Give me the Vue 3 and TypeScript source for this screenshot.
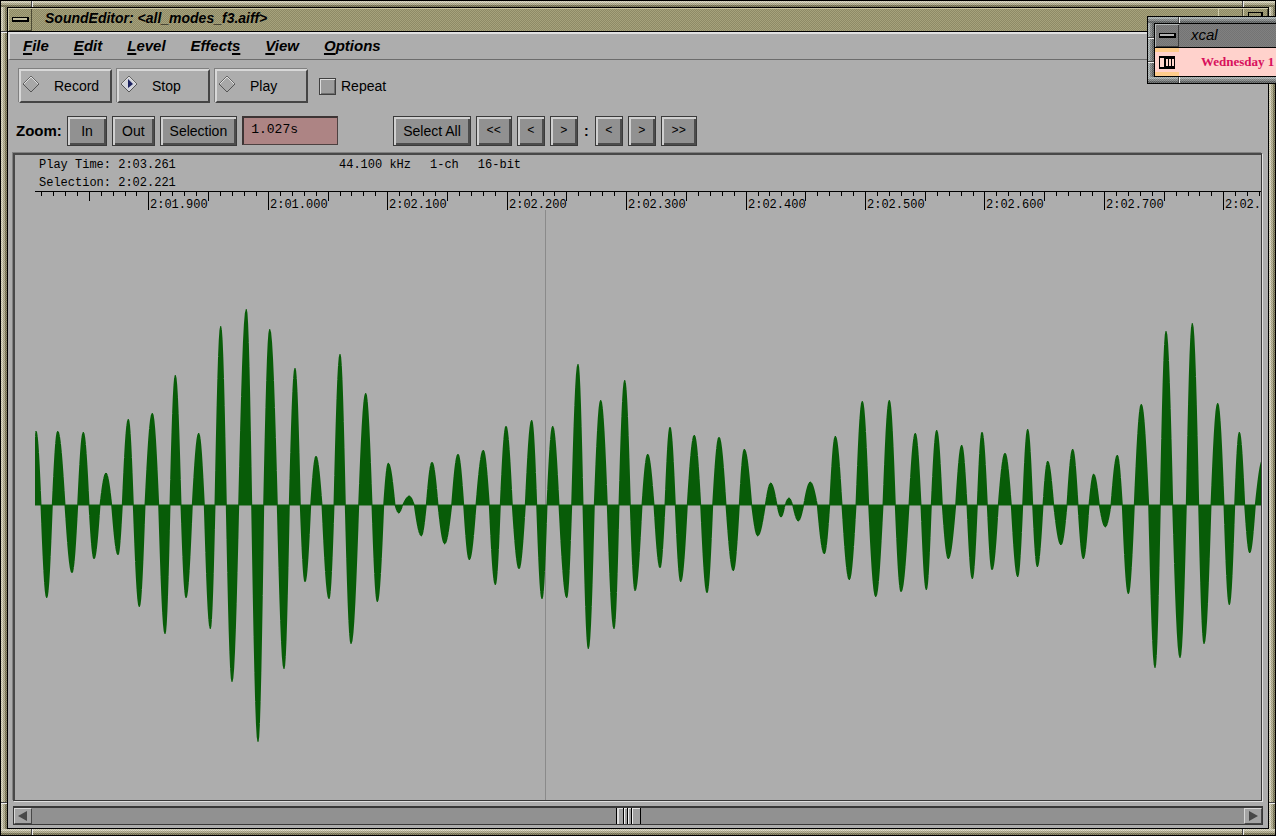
<script setup lang="ts">
import { ref } from 'vue'

interface MenuEntry { before: string; key: string; after: string }
interface Tick { left: string; kind: string; label: string }
type Lobe = [start: number, peak: number, amplitude: number]

const menus: MenuEntry[] = [
  { before: '', key: 'F', after: 'ile' },
  { before: '', key: 'E', after: 'dit' },
  { before: '', key: 'L', after: 'evel' },
  { before: 'Effect', key: 's', after: '' },
  { before: '', key: 'V', after: 'iew' },
  { before: '', key: 'O', after: 'ptions' },
]

const transport = ['Record', 'Stop', 'Play']
const active = ref('Stop')
const repeat = ref(false)
const duration = ref('1.027s')

const PLOT_WIDTH = 1226
const BASELINE = 295

const labels = ['2:01.900', '2:01.000', '2:02.100', '2:02.200', '2:02.300', '2:02.400', '2:02.500', '2:02.600', '2:02.700', '2:02.']

const ticks: Tick[] = []
for (let i = -9; i <= 93; i++) {
  const x = Math.round(113.4 + i * 11.944)
  const major = i >= 0 && i % 10 === 0
  const half = i % 5 === 0
  ticks.push({
    left: (x / PLOT_WIDTH) * 100 + '%',
    kind: major ? 'major' : half ? 'half' : 'minor',
    label: major ? labels[i / 10] : '',
  })
}

// Half-cycles of the signal: where each begins, where it peaks, and its signed height.
const lobes: Lobe[] = [
  [34, 36, 74], [41, 46.7, -93], [52.3, 57.7, 74], [65, 72, -68], [77.7, 83.3, 73], [89, 94, -54],
  [100, 106, 32], [111.7, 118, -50], [122.3, 128.3, 86], [133.3, 139.3, -102], [145, 152.3, 92],
  [158.7, 165, -129], [170, 175.3, 130], [181, 186, -93], [192.3, 198.7, 72], [204.3, 210.3, -124],
  [215, 220.7, 179], [226.3, 232, -177], [238.7, 246.3, 196], [251.7, 258, -237], [263.7, 269.7, 176],
  [277.3, 284, -164], [289.3, 295, 137], [300.3, 305, -77], [310.7, 316, 49], [322, 329, -94],
  [334, 340, 151], [345.3, 351, -139], [358.7, 365.7, 112], [372, 377.3, -97], [383.7, 388.3, 42],
  [395, 398.7, -8], [402.7, 409.3, 9], [414.3, 421.3, -31], [426.3, 432, 43], [438, 444.7, -39],
  [451.7, 458, 51], [463.7, 469.3, -55], [476, 483.3, 55], [489.3, 495.3, -80], [500.3, 506, 79],
  [512.3, 519, -64], [525.3, 531.7, 85], [536.7, 542, -94], [547, 552.7, 79], [559, 566.7, -93],
  [571.7, 578, 141], [583, 588.3, -144], [594.3, 600.7, 105], [607.3, 614, -124], [619, 624.7, 125],
  [630.3, 635, -86], [642, 647.7, 51], [654, 660, -63], [665, 670, 78], [675.3, 680.7, -77],
  [687.3, 694.3, 70], [700.7, 707, -88], [712.7, 719, 68], [726, 733.3, -66], [739.3, 744.3, 56],
  [751.7, 757.7, -31], [765.3, 770.7, 22], [777, 781, -12], [785, 789, 7], [792.7, 798.3, -16],
  [803.7, 810.3, 23], [817.3, 824.3, -49], [829.7, 835.3, 69], [842, 849.3, -75], [856, 862.3, 104],
  [868.7, 875.7, -92], [883, 889.3, 105], [895.3, 901, -87], [909, 915.3, 72], [921, 926.3, -85],
  [931.3, 936.7, 75], [942.3, 948.3, -54], [955.7, 961.7, 60], [967, 972.3, -74], [977.3, 982, 73],
  [987.3, 992, -65], [998.3, 1005, 52], [1011.3, 1017.7, -72], [1022.7, 1027.7, 76],
  [1032.7, 1037.3, -62], [1043, 1047.7, 44], [1053.7, 1061, -40], [1067, 1072.7, 56], [1078, 1083.3, -54],
  [1089, 1093.7, 31], [1099.3, 1105.3, -22], [1111, 1117.3, 50], [1122.3, 1128.3, -89],
  [1134.3, 1141.3, 101], [1148.7, 1155, -163], [1160.3, 1166, 174], [1172.7, 1180, -153],
  [1186.3, 1192.3, 182], [1198.7, 1204, -139], [1211, 1217.7, 102], [1224, 1229.3, -100],
  [1234.7, 1239.3, 73], [1244.7, 1249.7, -48], [1255.3, 1263, 46], [1270, 1275, 0],
]

const ORIGIN = 35
const point = (x: number, height: number) => `L${(x - ORIGIN).toFixed(2)} ${(BASELINE + 0.5 - height).toFixed(2)}`
let wave = `M0 ${BASELINE + 0.5}`
for (let n = 0; n < lobes.length - 1; n++) {
  const [start, peak, amp] = lobes[n]
  const end = lobes[n + 1][0]
  const steps = 8
  for (let s = 0; s <= steps; s++) {
    const x = start + ((peak - start) * s) / steps
    if (x >= ORIGIN) wave += point(x, amp * Math.sin((Math.PI / 2) * (s / steps)))
  }
  for (let s = 1; s <= steps; s++) {
    wave += point(peak + ((end - peak) * s) / steps, amp * Math.cos((Math.PI / 2) * (s / steps)))
  }
}
wave += 'Z'
</script>

<template>
  <div class="desktop">
    <main class="frame">
      <i class="notch-v top start"></i><i class="notch-v top end"></i>
      <i class="notch-v bottom start"></i><i class="notch-v bottom end"></i>
      <i class="notch-h left upper"></i><i class="notch-h left lower"></i><i class="notch-h right lower"></i>
      <div class="window">
        <header class="titlebar">
          <button class="tb-menu" aria-label="Window menu"><span class="dash"></span></button>
          <h1 class="title">SoundEditor: &lt;all_modes_f3.aiff&gt;</h1>
          <button class="tb-btn" aria-label="Minimize"><span class="dot"></span></button>
          <button class="tb-btn" aria-label="Maximize"><span class="square"></span></button>
        </header>

        <nav class="menubar">
          <button v-for="m in menus" :key="m.key" class="menu">{{ m.before }}<u>{{ m.key }}</u>{{ m.after }}</button>
        </nav>

        <section class="transport">
          <button v-for="t in transport" :key="t" class="deck" @click="active = t">
            <svg class="led" width="18" height="18" viewBox="0 0 18 18">
              <path d="M9 1L17 9L9 17L1 9Z" :fill="active === t ? '#d2d4dc' : '#a8a8a8'" />
              <path d="M1 9L9 17L17 9" fill="none" stroke="#555" stroke-width="1" />
              <path d="M1 9L9 1L17 9" fill="none" stroke="#666" stroke-width="1" />
              <path d="M2 9L9 2L16 9" fill="none" stroke="#e0e0e0" stroke-width="1" />
              <path v-if="active === t" d="M8 4L13 9L8 13Z" fill="#1c2260" />
            </svg>
            <span>{{ t }}</span>
          </button>
          <label class="repeat"><input v-model="repeat" type="checkbox" class="check" />Repeat</label>
        </section>

        <section class="zoombar">
          <label class="strong" for="zoom">Zoom:</label>
          <button class="push">In</button>
          <button class="push">Out</button>
          <button class="push">Selection</button>
          <input id="zoom" v-model="duration" class="field" type="text" />
          <button class="push">Select All</button>
          <button class="push arrow double">&lt;&lt;</button>
          <button class="push arrow">&lt;</button>
          <button class="push arrow">&gt;</button>
          <span class="colon">:</span>
          <button class="push arrow">&lt;</button>
          <button class="push arrow">&gt;</button>
          <button class="push arrow double">&gt;&gt;</button>
        </section>

        <section class="plot">
          <div class="info">
            <span class="time">Play Time: 2:03.261</span>
            <span>44.100 kHz</span><span>1-ch</span><span>16-bit</span>
          </div>
          <div class="info">Selection: 2:02.221</div>
          <div class="ruler">
            <span v-for="(t, i) in ticks" :key="i" class="tick" :class="t.kind" :style="{ left: t.left }">{{ t.label }}</span>
          </div>
          <svg class="wave" viewBox="0 0 1226 591" preserveAspectRatio="none" shape-rendering="crispEdges">
            <rect x="510" y="0" width="1" height="591" fill="#8a8a8a" />
            <path :d="wave" fill="#085c08" stroke="#085c08" stroke-width="1" stroke-linejoin="bevel" />
            <rect x="0" y="295" width="1226" height="1" fill="#085c08" />
          </svg>
        </section>

        <div class="scroll">
          <button class="sc-btn" aria-label="Scroll left"><svg width="10" height="10" viewBox="0 0 10 10"><path d="M0 5L9 0V10Z" fill="#484848" /></svg></button>
          <div class="track"><div class="thumb"><i></i><i></i><i></i></div></div>
          <button class="sc-btn" aria-label="Scroll right"><svg width="10" height="10" viewBox="0 0 10 10"><path d="M10 5L1 0V10Z" fill="#484848" /></svg></button>
        </div>
      </div>
    </main>

    <aside class="xcal">
      <i class="notch-v top xs"></i><i class="notch-v bottom xs"></i>
      <i class="notch-h left xu"></i><i class="notch-h left xl"></i>
      <div class="xcal-inner">
        <div class="xcal-title">
          <button class="tb-menu gray" aria-label="Calendar window menu"><span class="dash"></span></button>
          <h2 class="title light">xcal</h2>
        </div>
        <div class="xcal-body">
          <span class="cal-icon">
            <svg width="16" height="13" viewBox="0 0 16 13" shape-rendering="crispEdges">
              <rect width="16" height="13" fill="#000" />
              <rect x="1" y="2" width="4" height="9" fill="#ffd6cc" />
              <rect x="7" y="3" width="2" height="7" fill="#ffd6cc" />
              <rect x="10" y="3" width="2" height="7" fill="#ffd6cc" />
              <rect x="13" y="3" width="2" height="7" fill="#ffd6cc" />
            </svg>
          </span>
          <span class="date">Wednesday 1</span>
        </div>
      </div>
    </aside>
  </div>
</template>

<style>
body { margin: 0; }
</style>

<style scoped>
* { box-sizing: border-box; }
button, input { font: inherit; color: inherit; margin: 0; border-radius: 0; }
.desktop {
  position: relative;
  height: 100vh;
  overflow: hidden;
  font: 14px/16px "Liberation Sans", Arial, sans-serif;
  color: #000;
  background: #adadad;
}
.frame {
  --hi: #d4d0b8;
  --mid: #b0ac8c;
  --lo: #7a7656;
  height: 100%;
  position: relative;
}
.frame, .xcal {
  border: 1px solid #000;
  padding: 6px;
  background:
    repeating-conic-gradient(rgba(255, 255, 255, 0.16) 0 25%, rgba(0, 0, 0, 0.1) 0 50%) 0 0 / 2px 2px,
    linear-gradient(to bottom, var(--hi) 2px, var(--mid) 2px 4px, var(--lo) 4px) top / 100% 6px no-repeat,
    linear-gradient(to bottom, var(--hi) 2px, var(--mid) 2px 4px, var(--lo) 4px) bottom / 100% 6px no-repeat,
    linear-gradient(to right, var(--hi) 2px, var(--mid) 2px 4px, var(--lo) 4px) left / 6px 100% no-repeat,
    linear-gradient(to right, var(--hi) 2px, var(--mid) 2px 4px, var(--lo) 4px) right / 6px 100% no-repeat;
}
.notch-v, .notch-h { position: absolute; background: #444; }
.notch-v { width: 2px; height: 6px; border-right: 1px solid #eee; }
.notch-h { width: 6px; height: 2px; border-bottom: 1px solid #eee; }
.top { top: 0; }
.bottom { bottom: 0; }
.left { left: 0; }
.right { right: 0; }
.start { left: 30px; }
.end { right: 31px; }
.upper { top: 30px; }
.lower { bottom: 31px; }
.xs { left: 30px; }
.xu { top: 20px; }
.xl { top: 44px; }

.window {
  height: 100%;
  display: flex;
  flex-direction: column;
  border: 1px solid #000;
  background: #adadad;
}
.titlebar {
  display: flex;
  height: 24px;
  flex: none;
  border-bottom: 1px solid #000;
  background: repeating-conic-gradient(#8e8a66 0 25%, #a6a27c 0 50%) 0 0 / 2px 2px;
  box-shadow: inset 1px 1px 0 #c8c4a0;
}
.tb-menu, .tb-btn {
  width: 24px;
  padding: 0;
  border: 0;
  background: none;
  box-shadow: inset 1px 1px 0 #d0ccac, inset -1px -1px 0 #4c4a34;
  display: flex;
  align-items: center;
  justify-content: center;
}
.tb-btn { width: 25px; }
.gray { box-shadow: inset 1px 1px 0 #b4b8b8, inset -1px -1px 0 #3c3c3c; }
.dash {
  width: 17px;
  height: 5px;
  border: 1px solid #000;
  border-right-width: 2px;
  border-bottom-width: 2px;
  background: #c4c0a0;
}
.gray .dash { background: #b4b4b4; }
.dot { width: 5px; height: 5px; border: 1px solid #000; }
.square { width: 15px; height: 15px; border: 1px solid #000; border-right-width: 2px; }
.title {
  flex: 1;
  margin: 0;
  padding-left: 13px;
  font: italic bold 14px/21px "Liberation Sans", Arial, sans-serif;
}
.menubar {
  display: flex;
  gap: 25px;
  height: 28px;
  flex: none;
  padding: 0 13px 2px;
  border: 2px solid;
  border-color: #e0e0e0 #8a8a8a #6c6c6c #d8d8d8;
  border-right-width: 1px;
  border-bottom-width: 1px;
  align-items: center;
}
.menu {
  padding: 0;
  border: 0;
  background: none;
  font: italic bold 15px/18px "Liberation Sans", Arial, sans-serif;
}
.menu u { text-decoration-thickness: 2px; text-underline-offset: 2px; }

.transport {
  display: flex;
  gap: 5px;
  align-items: center;
  padding: 9px 11px 0;
  height: 43px;
  flex: none;
}
.deck {
  width: 93px;
  height: 34px;
  padding: 0;
  display: flex;
  align-items: center;
  border: 2px solid;
  border-color: #d8d8d8 #454545 #454545 #d8d8d8;
  background: #adadad;
  box-shadow: -1px -1px 0 #808080;
}
.led { margin: 0 14px 4px 1px; }
.repeat {
  display: flex;
  align-items: center;
  gap: 5px;
  margin-left: 6px;
}
.check {
  appearance: none;
  width: 17px;
  height: 17px;
  border: 1px solid #404040;
  background: #9c9c9c;
  box-shadow: inset 1px 1px 0 #dcdcdc, inset -1px -1px 0 #6e6e6e;
}
.zoombar {
  display: flex;
  gap: 5px;
  align-items: center;
  height: 50px;
  flex: none;
  padding: 5px 8px 0;
}
.strong { font-weight: bold; font-size: 15px; width: 46px; }
.push {
  height: 30px;
  padding: 0 9px;
  border: 1px solid #3a3a3a;
  background: #919191;
  box-shadow: inset 2px 2px 0 #d0d0d0, inset -2px -2px 0 #4c4c4c;
  min-width: 40px;
}
.arrow {
  min-width: 28px;
  padding: 0 8px;
  font: 12px/16px "Liberation Mono", monospace;
}
.double { min-width: 36px; }
.field {
  width: 96px;
  height: 29px;
  margin-right: 50px;
  padding: 0 7px 4px;
  border: 2px solid;
  border-color: #3c3434 #4c4040 #4c4040 #3c3434;
  border-right-width: 1px;
  border-bottom-width: 1px;
  background: #ad8484;
  font: 13px/16px "Liberation Mono", monospace;
}
.colon { width: 7px; text-align: center; font-weight: bold; }

.plot {
  flex: 1;
  min-height: 0;
  display: flex;
  flex-direction: column;
  margin: 0 6px 0 5px;
  padding-left: 20px;
  border: 2px solid;
  border-color: #484848 #383838 #383838 #484848;
  border-right-width: 1px;
  border-bottom-width: 1px;
  box-shadow: 1px 1px 0 #e0e0e0, -1px -1px 0 #808080;
  font: 12px/18px "Liberation Mono", monospace;
  overflow: hidden;
}
.info {
  display: flex;
  gap: 19px;
  flex: none;
  height: 18px;
  line-height: 20px;
  padding-left: 4px;
  white-space: pre;
}
.time { width: 281px; }
.ruler {
  position: relative;
  flex: none;
  height: 19px;
  border-top: 1px solid #000;
}
.tick {
  position: absolute;
  top: 0;
  height: 4px;
  border-left: 1px solid #000;
  padding-left: 1px;
  line-height: 26px;
  white-space: nowrap;
}
.half { height: 9px; }
.major { height: 18px; }
.wave { display: block; width: 100%; flex: 1; min-height: 0; }

.scroll {
  display: flex;
  flex: none;
  height: 19px;
  margin: 5px 5px 3px;
  border: 1px solid #383838;
  border-top-width: 2px;
  background: #919191;
}
.sc-btn {
  width: 18px;
  padding: 0;
  border: 1px solid;
  border-color: #d8d8d8 #484848 #484848 #d8d8d8;
  background: #a4a4a4;
  display: flex;
  align-items: center;
  justify-content: center;
}
.track { flex: 1; display: flex; justify-content: center; padding-right: 20px; }
.thumb {
  width: 25px;
  display: flex;
  justify-content: center;
  gap: 2px;
  border-left: 1px solid #000;
  border-right: 1px solid #000;
  background: #a0a0a0;
  box-shadow: inset 2px 1px 0 #e0e0e0;
}
.thumb i { width: 2px; background: linear-gradient(to right, #000 1px, #f0f0f0 1px); }

.xcal {
  --hi: #a8b0b0;
  --mid: #848888;
  --lo: #606464;
  position: absolute;
  top: 16px;
  right: 0;
  width: 129px;
  height: 68px;
  border-right: 0;
  padding-right: 0;
  overflow: hidden;
}
.xcal-inner {
  height: 100%;
  display: flex;
  flex-direction: column;
  border: 1px solid #000;
  border-right: 0;
}
.xcal-title {
  display: flex;
  height: 24px;
  border-bottom: 1px solid #000;
  background: repeating-conic-gradient(#747474 0 25%, #808080 0 50%) 0 0 / 2px 2px;
}
.light { font-weight: normal; font-size: 15px; padding-left: 12px; }
.xcal-body {
  flex: 1;
  display: flex;
  align-items: center;
  background: #ffd2cc;
}
.cal-icon {
  width: 24px;
  align-self: stretch;
  display: flex;
  align-items: center;
  justify-content: center;
  border: solid #ffcc8c;
  border-width: 4px 0;
}
.date {
  padding-left: 22px;
  white-space: nowrap;
  color: #d8105c;
  font: bold 13px/18px "Liberation Serif", "Times New Roman", serif;
}
</style>
